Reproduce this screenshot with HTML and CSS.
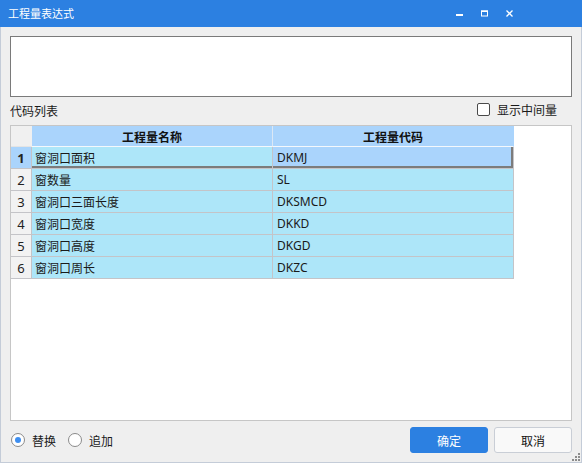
FILE: index.html
```html
<!DOCTYPE html>
<html lang="zh-CN">
<head>
<meta charset="utf-8">
<title>工程量表达式</title>
<link rel="stylesheet" href="styles.css">
</head>
<body>
<div class="window">
  <div class="titlebar">
    <span class="title">工程量表达式</span>
    <div class="controls">
      <span class="ctl"><svg width="7" height="7" viewBox="0 0 7 7"><rect x="0" y="4" width="7" height="2" fill="#fff"/></svg></span>
      <span class="ctl"><svg width="7" height="7" viewBox="0 0 7 7"><rect x="0.5" y="1" width="6" height="5" fill="none" stroke="#fff" stroke-width="1"/><rect x="0" y="0.5" width="7" height="1.5" fill="#fff"/></svg></span>
      <span class="ctl"><svg width="7" height="7" viewBox="0 0 7 7"><path d="M0.5 0.5 L6.5 6.5 M6.5 0.5 L0.5 6.5" stroke="#fff" stroke-width="1.3"/></svg></span>
    </div>
  </div>
  <div class="body">
    <div class="expr"></div>
    <div class="listbar">
      <span class="label">代码列表</span>
      <label class="check"><span class="box"></span><span>显示中间量</span></label>
    </div>
    <div class="grid">
      <table class="table">
        <colgroup><col class="c-hdr"><col class="c-col"><col class="c-col"></colgroup>
        <thead>
          <tr><th class="corner"></th><th>工程量名称</th><th>工程量代码</th></tr>
        </thead>
        <tbody>
          <tr class="current"><td class="rh">1</td><td class="name">窗洞口面积</td><td class="code">DKMJ</td></tr>
          <tr><td class="rh">2</td><td class="name">窗数量</td><td class="code">SL</td></tr>
          <tr><td class="rh">3</td><td class="name">窗洞口三面长度</td><td class="code">DKSMCD</td></tr>
          <tr><td class="rh">4</td><td class="name">窗洞口宽度</td><td class="code">DKKD</td></tr>
          <tr><td class="rh">5</td><td class="name">窗洞口高度</td><td class="code">DKGD</td></tr>
          <tr><td class="rh">6</td><td class="name">窗洞口周长</td><td class="code">DKZC</td></tr>
        </tbody>
      </table>
    </div>
    <div class="footer">
      <div class="radios">
        <label class="radio"><span class="circle checked"></span><span>替换</span></label>
        <label class="radio"><span class="circle"></span><span>追加</span></label>
      </div>
      <div class="buttons">
        <button class="btn primary">确定</button>
        <button class="btn">取消</button>
      </div>
    </div>
    <div class="grip">
      <span class="dot d1"></span><span class="dot d2"></span><span class="dot d3"></span>
      <span class="dot d4"></span><span class="dot d5"></span><span class="dot d6"></span>
    </div>
  </div>
</div>
</body>
</html>
```

FILE: styles.css
```css
* { box-sizing: border-box; }
html, body { margin: 0; padding: 0; }
body {
  width: 582px;
  height: 463px;
  overflow: hidden;
  background: #efefef;
  font-family: "Noto Sans", "Noto Sans CJK SC", sans-serif;
  font-size: 12px;
  color: #1a1a1a;
}
.window {
  width: 582px;
  height: 463px;
  display: flex;
  flex-direction: column;
}
.titlebar {
  height: 27px;
  background: #2c80e1;
  color: #fff;
  display: flex;
  align-items: center;
  justify-content: space-between;
  padding-left: 8px;
  flex: none;
}
.title {
  font-family: "Noto Sans CJK SC", sans-serif;
  font-size: 11px;
  line-height: 1;
  margin-top: -1px;
}
.controls {
  display: flex;
  margin-right: 60px;
}
.ctl {
  width: 25px;
  height: 27px;
  display: flex;
  align-items: center;
  justify-content: center;
}
.body {
  flex: 1;
  position: relative;
  border: 1px solid #c4ccd8;
  border-top: none;
  padding: 9px 9px 0 9px;
  display: flex;
  flex-direction: column;
}
.expr {
  height: 61px;
  background: #fff;
  border: 1px solid #7a7a7a;
  flex: none;
}
.listbar {
  height: 28px;
  display: flex;
  align-items: center;
  justify-content: space-between;
  flex: none;
}
.label {
  font-family: "Noto Sans CJK SC", sans-serif;
  margin-top: -2px;
}
.check {
  display: flex;
  align-items: center;
  gap: 7px;
  margin-right: 15px;
  margin-top: -3px;
  font-family: "Noto Sans CJK SC", sans-serif;
}
.check .box {
  width: 13px;
  height: 13px;
  border: 1px solid #4a4a4a;
  border-radius: 2px;
  background: #fff;
}
.grid {
  height: 296px;
  background: #fff;
  border: 1px solid #c6c6c6;
  flex: none;
}
.table {
  table-layout: fixed;
  width: 503px;
  border-collapse: separate;
  border-spacing: 0;
}
.c-hdr { width: 21px; }
.c-col { width: 241px; }
.table th, .table td {
  padding: 0;
  white-space: nowrap;
  overflow: hidden;
  font-weight: normal;
}
.table th {
  height: 21px;
  background: #aad4fc;
  border-right: 1px solid #dbe8f5;
  border-bottom: 1px solid #f4f8fc;
  font-family: "Noto Sans CJK SC", sans-serif;
  font-weight: bold;
  text-align: center;
  color: #111;
}
.table th:last-child { border-right: 1px solid #aad4fc; }
.table th.corner {
  background: #f0f0f0;
  border-right: 1px solid #f0f0f0;
  border-bottom: 1px solid #e4e4e4;
}
.table td {
  height: 22px;
  background: #ade6f9;
  border-right: 1px solid #c4c4c8;
  border-bottom: 1px solid #c4c4c8;
}
.table td.rh {
  background: #f2f2f2;
  text-align: center;
  font-size: 13px;
  color: #222;
}
.table td.name {
  padding-left: 3px;
  font-family: "Noto Sans CJK SC", sans-serif;
}
.table td.code {
  padding-left: 4px;
}
.table tr.current td.rh {
  background: #aad4fc;
  font-weight: bold;
}
.table tr.current td.name {
  box-shadow: inset 0 -2px 0 #7c7c7c;
}
.table tr.current td.code {
  background: #aad4fc;
  box-shadow: inset -2px -2px 0 #7c7c7c;
}
.footer {
  margin-top: 6px;
  height: 26px;
  display: flex;
  align-items: center;
  justify-content: space-between;
  flex: none;
}
.radios {
  display: flex;
  align-items: center;
  gap: 12px;
  padding-left: 1px;
}
.radio {
  display: flex;
  align-items: center;
  gap: 7px;
  font-family: "Noto Sans CJK SC", sans-serif;
}
.circle {
  width: 14px;
  height: 14px;
  border: 1px solid #8a8a8a;
  border-radius: 50%;
  background: #fff;
  display: flex;
  align-items: center;
  justify-content: center;
}
.circle.checked::after {
  content: "";
  width: 6px;
  height: 6px;
  border-radius: 50%;
  background: #3f8ff0;
}
.buttons {
  display: flex;
  gap: 6px;
}
.btn {
  width: 78px;
  height: 26px;
  border-radius: 3px;
  font-family: "Noto Sans CJK SC", sans-serif;
  font-size: 12px;
  padding: 0;
  border: 1px solid #c9ced6;
  background: #f9f9f9;
  color: #111;
}
.btn.primary {
  background: #2c80e1;
  border-color: #2c80e1;
  color: #fff;
}
.grip {
  position: absolute;
  right: 0;
  bottom: 0;
  width: 10px;
  height: 10px;
}
.dot {
  position: absolute;
  width: 2px;
  height: 2px;
  background: #8c8c8c;
}
.d1 { left: 7px; top: 1px; }
.d2 { left: 4px; top: 4px; }
.d3 { left: 7px; top: 4px; }
.d4 { left: 1px; top: 7px; }
.d5 { left: 4px; top: 7px; }
.d6 { left: 7px; top: 7px; }
```
